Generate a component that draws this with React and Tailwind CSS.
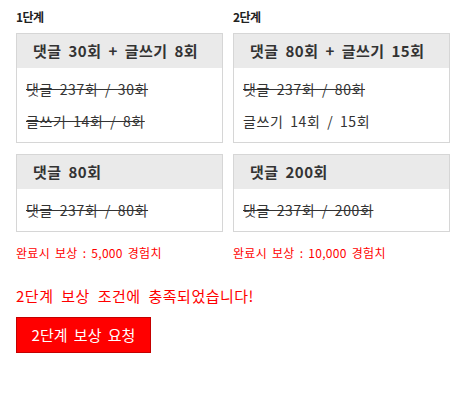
export default function App() {
  const stages = [
    {
      label: '1단계',
      width: 'w-[207px]',
      reward: '완료시 보상 : 5,000 경험치',
      cards: [
        { title: '댓글 30회 + 글쓰기 8회', rows: [{ t: '댓글 237회 / 30회', done: true }, { t: '글쓰기 14회 / 8회', done: true }] },
        { title: '댓글 80회', rows: [{ t: '댓글 237회 / 80회', done: true }] },
      ],
    },
    {
      label: '2단계',
      width: 'w-[217px]',
      reward: '완료시 보상 : 10,000 경험치',
      cards: [
        { title: '댓글 80회 + 글쓰기 15회', rows: [{ t: '댓글 237회 / 80회', done: true }, { t: '글쓰기 14회 / 15회', done: false }] },
        { title: '댓글 200회', rows: [{ t: '댓글 237회 / 200회', done: true }] },
      ],
    },
  ]

  return (
    <div
      className="w-[470px] h-[402px] bg-white px-4 pt-[9px] text-[#333]"
      style={{ fontFamily: '"Noto Sans CJK KR", "Liberation Sans", sans-serif' }}
    >
      {/* Stage columns */}
      <div className="flex gap-[10px]">
        {stages.map((s) => (
          <div key={s.label} className={s.width}>
            <div className="text-[12px] font-bold leading-4 text-[#222] tracking-[-0.5px]">{s.label}</div>
            <div className="mt-2 flex flex-col gap-[11px]">
              {s.cards.map((c) => (
                <div key={c.title} className="border border-[#d6d6d6] bg-white">
                  <div className="h-[34px] bg-[#eaeaea] pl-4 flex items-center text-[15px] font-semibold text-[#333] whitespace-nowrap tracking-[0.5px] [word-spacing:3px]">
                    {c.title}
                  </div>
                  <div className="px-[9px] py-[5px]">
                    {c.rows.map((r) => (
                      <div
                        key={r.t}
                        className={`h-8 flex items-center text-[14px] text-[#333] whitespace-nowrap tracking-[0.6px] [word-spacing:3px] ${r.done ? 'line-through' : ''}`}
                      >
                        {r.t}
                      </div>
                    ))}
                  </div>
                </div>
              ))}
            </div>
            <div className="mt-[13px] text-[12px] leading-4 text-[#ff0000] tracking-[0.3px] [word-spacing:2px]">{s.reward}</div>
          </div>
        ))}
      </div>

      {/* Result */}
      <div className="mt-[25px] text-[15px] leading-5 text-[#ff0000] tracking-[0.5px] [word-spacing:4px]">2단계 보상 조건에 충족되었습니다!</div>
      <button className="mt-[11px] w-[135px] h-[36px] bg-[#ff0000] border border-[#c40000] text-white text-[15px] [word-spacing:3px]">
        2단계 보상 요청
      </button>
    </div>
  )
}
